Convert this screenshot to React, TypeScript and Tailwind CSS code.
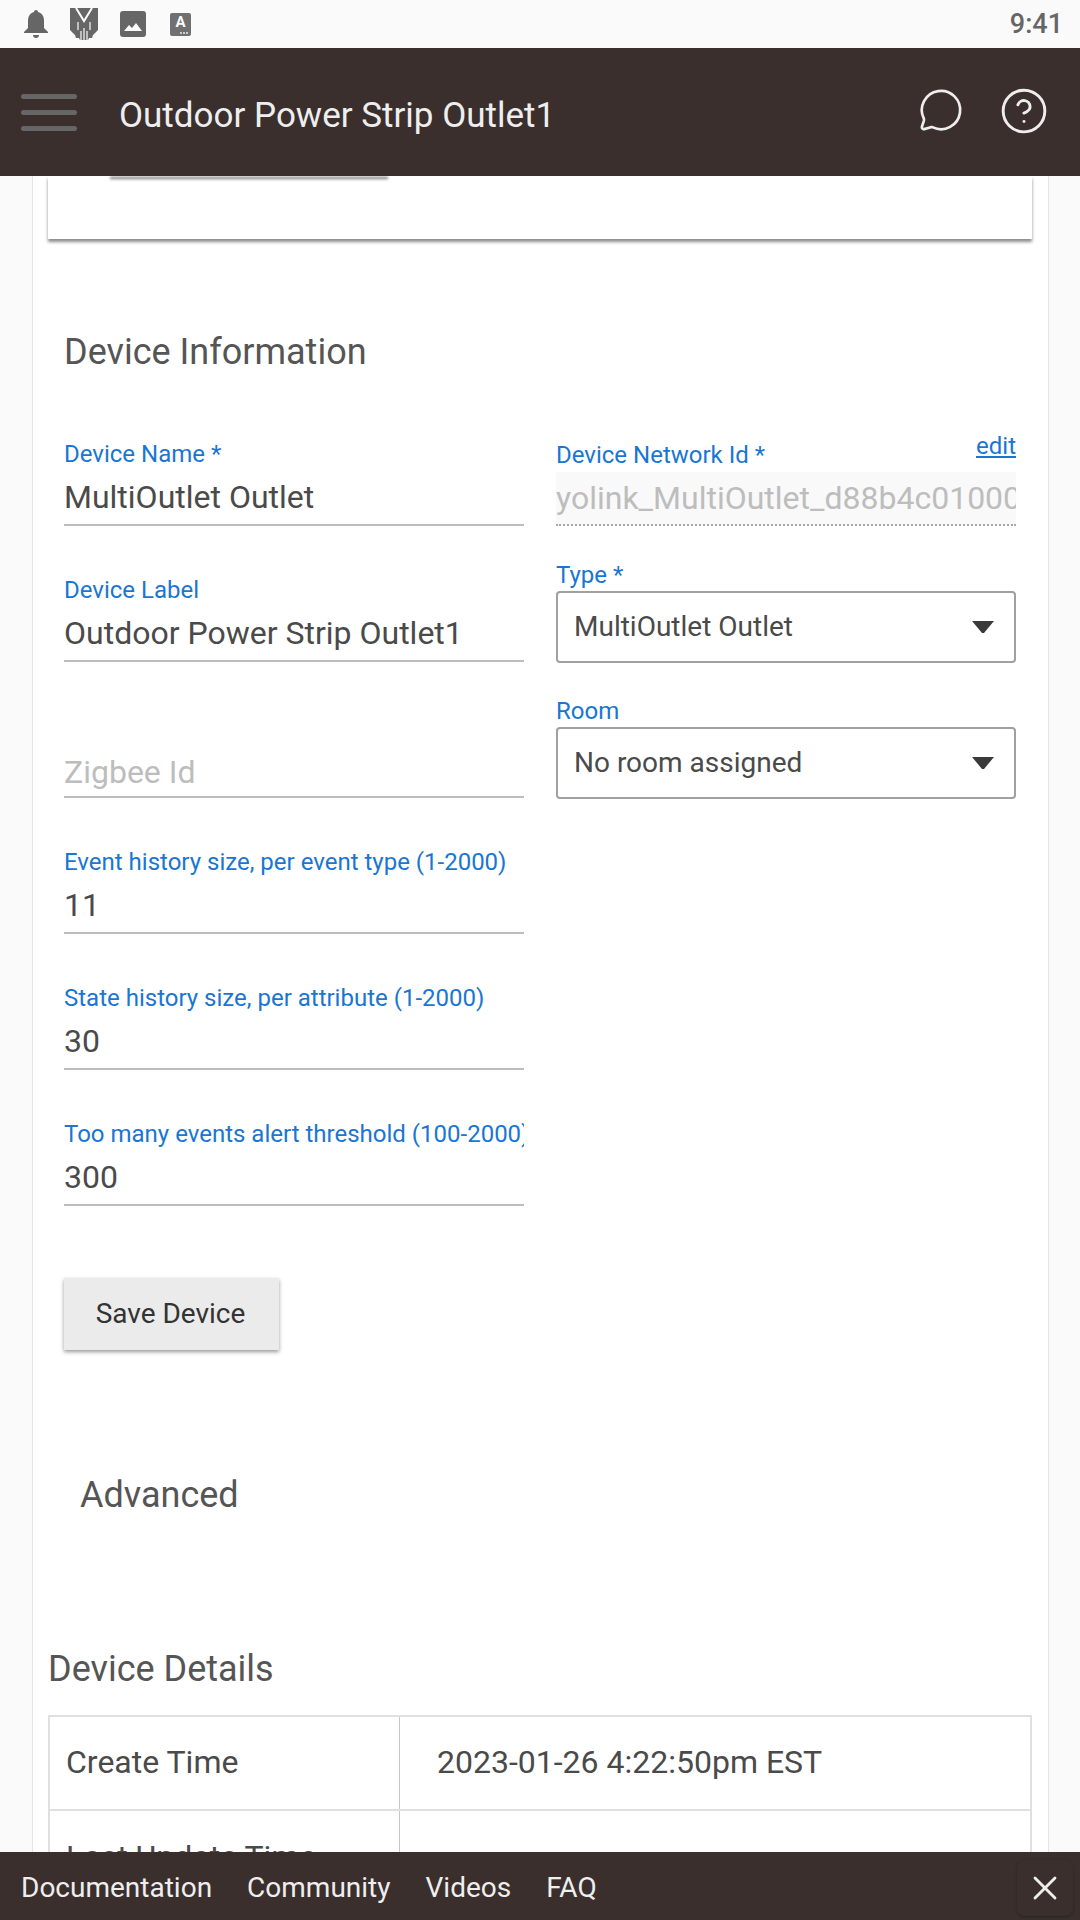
import { MessageCircle, CircleHelp, X } from 'lucide-react';

const font = { fontFamily: 'Roboto, sans-serif' };

function Field({ label, value, muted }: { label?: string; value: string; muted?: boolean }) {
  return (
    <div className="h-[136px] flex flex-col justify-end">
      {label && <div className="mb-[4px] text-[24px] leading-[28px] text-[#1976d2] whitespace-nowrap overflow-hidden">{label}</div>}
      <div className={`flex items-center text-[32px] border-b-2 border-[#bdbdbd] ${muted ? 'h-[52px] pt-[2px] text-[#bdbdbd]' : 'h-[54px] pb-[2px] text-[#4a4a4a]'}`}>{value}</div>
    </div>
  );
}

function SelectBox({ label, value }: { label: string; value: string }) {
  return (
    <div className="h-[136px] flex flex-col justify-end">
      <div className="mb-[2px] text-[24px] leading-[28px] text-[#1976d2]">{label}</div>
      <div className="h-[72px] flex items-center justify-between pl-[16px] pr-[20px] border-2 border-[#a0a0a0] rounded-[4px] text-[28px] text-[#4a4a4a]">
        {value}
        <svg width="22" height="12" viewBox="0 0 22 12"><path d="M0 0h22L12 12h-2z" fill="#3a3a3a" /></svg>
      </div>
    </div>
  );
}

export default function App() {
  return (
    <div className="w-[1080px] h-[1920px] flex flex-col bg-[#fafafa] overflow-hidden" style={font}>
      {/* status bar */}
      <div className="h-[48px] shrink-0 flex items-center pl-[24px] pr-[17px] gap-[22px] bg-[#fafafa]">
        <svg width="24" height="28" viewBox="0 0 24 28" fill="#666"><path d="M12 0c1.200 0 2 .8 2 2 4 1 6 4.500 6 8.500V18l4 4v1H0v-1l4-4v-7.500C4 6.500 6 3 10 2c0-1.200.8-2 2-2zM9 25h6c0 2-1.300 3-3 3s-3-1-3-3z" /></svg>
        <svg width="28" height="32" viewBox="0 0 28 32">
          <path d="M0 0h28v22l-5 5-1 3h-3l-1 2h-8l-1-2H6l-1-3-5-5z" fill="#666" />
          <path d="M6 0l8 13 8-13" fill="none" stroke="#fafafa" strokeWidth="2" />
          <path d="M8 14v8M20 14v8M11 23v9M14 20v12M17 23v9" fill="none" stroke="#fafafa" strokeWidth="1.200" />
        </svg>
        <svg width="26" height="26" viewBox="0 0 26 26"><rect width="26" height="26" rx="3" fill="#666" /><path d="M4 20l5-6 3 3 4-5 6 8z" fill="#fafafa" /></svg>
        <div className="ml-[2px] w-[21px] h-[23px] bg-[#707070] rounded-[2px] relative text-[#fafafa] text-[15px] font-bold leading-[18px] text-center">
          A
          <span className="absolute right-[3px] bottom-[2px] flex gap-[1px]">
            <span className="w-[2px] h-[2px] bg-[#ccc]" />
            <span className="w-[2px] h-[2px] bg-[#ccc]" />
            <span className="w-[2px] h-[2px] bg-[#ccc]" />
          </span>
        </div>
        <div className="ml-auto text-[27px] font-medium text-[#666]">9:41</div>
      </div>

      <header className="h-[128px] shrink-0 flex items-center bg-[#3a2f2d] relative z-10 pl-[21px] pr-[31px]">
        <div className="flex flex-col gap-[11px] w-[56px]">
          <div className="h-[5px] rounded-full bg-[#666]" />
          <div className="h-[5px] rounded-full bg-[#666]" />
          <div className="h-[5px] rounded-full bg-[#666]" />
        </div>
        <div className="ml-[42px] pt-[8px] text-[35px] text-[#eeeeee]">Outdoor Power Strip Outlet1</div>
        <MessageCircle className="ml-auto mb-[4px] translate-x-[1px]" size={46} strokeWidth={1.400} color="#eeeeee" />
        <CircleHelp className="ml-[36px] mb-[2px]" size={50} strokeWidth={1.400} color="#eeeeee" />
      </header>

      <main className="flex-1 min-h-0 overflow-hidden">
        <div className="ml-[32px] w-[1017px] h-full bg-white border-x border-[#e4e4e4] pl-[15px] pr-[16px] overflow-hidden">
          <div className="h-[63px] bg-white shadow-[0_3px_3px_rgba(0,0,0,0.45)] relative">
            <div className="absolute left-[62px] -top-[2px] w-[278px] h-[2px] shadow-[0_3px_3px_rgba(0,0,0,0.6)]" />
          </div>

          <div className="ml-[16px] mt-[89px] text-[36px] leading-[48px] text-[#555]">Device Information</div>

          <div className="ml-[16px] grid grid-cols-[460px_460px] gap-x-[32px] mt-[14px]">
            <div>
              <Field label="Device Name *" value="MultiOutlet Outlet" />
              <Field label="Device Label" value="Outdoor Power Strip Outlet1" />
              <Field value="Zigbee Id" muted />
              <Field label="Event history size, per event type (1-2000)" value="11" />
              <Field label="State history size, per attribute (1-2000)" value="30" />
              <Field label="Too many events alert threshold (100-2000)" value="300" />
            </div>
            <div>
              <div className="h-[136px] flex flex-col justify-end relative">
                <a className="absolute right-0 top-[38px] text-[24px] text-[#1976d2] underline">edit</a>
                <div className="mb-[3px] text-[24px] leading-[28px] text-[#1976d2]">Device Network Id *</div>
                <div className="h-[54px] flex items-center text-[32px] text-[#bdbdbd] bg-[#f9f9f9] border-b-2 border-dotted border-[#a8a8a8] whitespace-nowrap overflow-hidden">yolink_MultiOutlet_d88b4c01000</div>
              </div>
              <div className="mt-[1px]">
                <SelectBox label="Type *" value="MultiOutlet Outlet" />
                <SelectBox label="Room" value="No room assigned" />
              </div>
            </div>
          </div>

          <button className="ml-[16px] mt-[72px] block w-[215px] h-[72px] pr-[2px] bg-[#ebebeb] text-[28px] text-[#333] shadow-[0_2px_4px_rgba(0,0,0,0.4)]">Save Device</button>

          <div className="ml-[32px] mt-[121px] text-[36px] leading-[48px] text-[#555]">Advanced</div>

          <div className="mt-[126px] text-[36px] leading-[48px] text-[#555]">Device Details</div>

          <div className="mt-[22px] border-2 border-[#e0e0e0] border-b-0">
            <div className="flex h-[94px] border-b-2 border-[#e0e0e0]">
              <div className="w-[350px] pl-[16px] pb-[2px] flex items-center text-[32px] text-[#4a4a4a] border-r border-[#c8c8c8]">Create Time</div>
              <div className="pl-[37px] pb-[2px] flex items-center text-[32px] text-[#4a4a4a]">2023-01-26 4:22:50pm EST</div>
            </div>
            <div className="flex h-[94px]">
              <div className="w-[350px] pl-[16px] pt-[22px] text-[32px] text-[#4a4a4a] border-r border-[#c8c8c8]">Last Update Time</div>
            </div>
          </div>
        </div>
      </main>

      <footer className="h-[68px] shrink-0 flex items-center bg-[#3a2f2d] relative z-10 pl-[21px] pr-[7px] text-[28px] text-[#eeeeee] gap-[35px]">
        <span className="pt-[4px]">Documentation</span>
        <span className="pt-[4px]">Community</span>
        <span className="pt-[4px]">Videos</span>
        <span className="pt-[4px]">FAQ</span>
        <div className="ml-auto mt-[4px] w-[56px] h-[56px] flex items-center justify-center rounded-[8px] shadow-[0_1px_3px_rgba(0,0,0,0.3)]">
          <X size={40} strokeWidth={1.700} color="#eeeeee" />
        </div>
      </footer>
    </div>
  );
}
